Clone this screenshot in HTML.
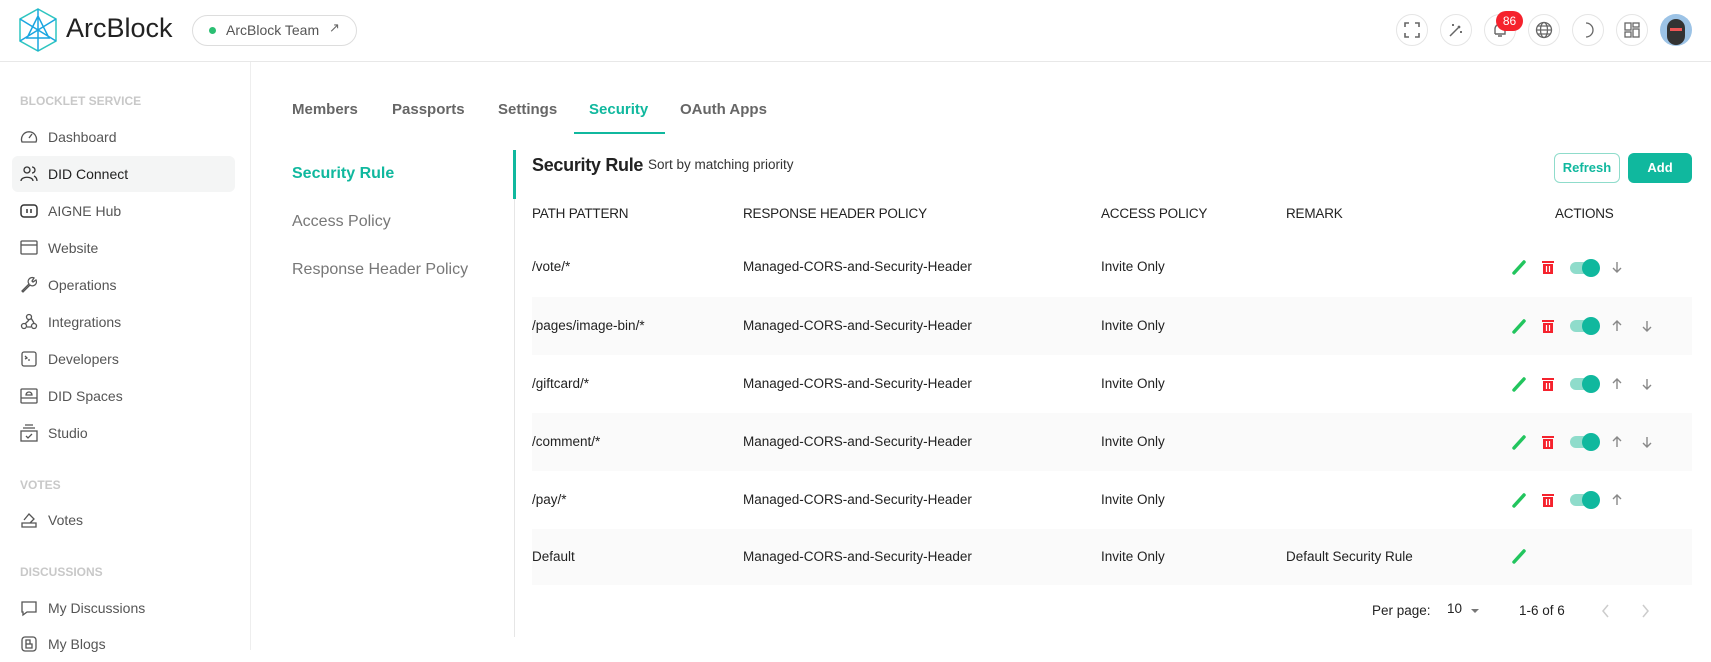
<!DOCTYPE html>
<html><head><meta charset="utf-8"><style>
*{box-sizing:border-box;margin:0;padding:0}
body{width:1711px;height:650px;overflow:hidden;background:#fff;font-family:"Liberation Sans",sans-serif;color:#222;position:relative}
.a{position:absolute;white-space:nowrap}
.hdr{position:absolute;left:0;top:0;width:1711px;height:62px;border-bottom:1px solid #e8e8e8}
.ic{position:absolute;top:14px;width:32px;height:32px;border:1px solid #e5e5e5;border-radius:50%;display:flex;align-items:center;justify-content:center}
.side{position:absolute;left:0;top:62px;width:251px;height:588px;border-right:1px solid #eee}
.sec{position:absolute;left:20px;font-size:12px;font-weight:bold;color:#c8c8c8}
.it{position:absolute;left:12px;width:223px;height:36px;display:flex;align-items:center;padding-left:8px;font-size:14px;color:#555;border-radius:6px}
.it svg{margin-right:10px}
.tab{position:absolute;top:101px;font-size:15px;font-weight:bold;color:#666}
.th{position:absolute;top:206px;font-size:13.5px;color:#222;letter-spacing:-0.2px}
.td{position:absolute;font-size:13.5px;color:#222}
.stripe{position:absolute;left:532px;width:1160px;height:58px;background:#fafafa}
.tog{position:absolute;width:28px;height:12px;border-radius:6px;background:#8fdccb}
.tog:after{content:"";position:absolute;right:-2px;top:-3px;width:18px;height:18px;border-radius:50%;background:#10b89e}
</style></head><body>
<div class="hdr"></div>
<svg class="a" style="left:19px;top:8px" width="38" height="44" viewBox="0 0 38 44" fill="none" stroke="#2ec5c0" stroke-width="1.5"><path d="M19 1L37 11V33L19 43L1 33V11Z"/><path d="M19 1V22M1 11L19 22L37 11M19 22V43M1 33L19 22L37 33M19 8L8 30H30Z" stroke="#1aa6e0"/></svg>
<div class="a" style="left:66px;top:13px;font-size:27px;color:#222">ArcBlock</div>
<div class="a" style="left:192px;top:15px;width:165px;height:31px;border:1px solid #ddd;border-radius:16px"></div>
<div class="a" style="left:209px;top:27px;width:7px;height:7px;border-radius:50%;background:#2bbf73"></div>
<div class="a" style="left:226px;top:22px;font-size:14px;color:#555">ArcBlock Team</div>
<div class="a" style="left:329px;top:20px;font-size:13px;color:#666">↗</div>
<div class="ic" style="left:1396px"><svg width="16" height="16" viewBox="0 0 16 16" fill="none" stroke="#666" stroke-width="1.6"><path d="M1 5V1H5M11 1H15V5M15 11V15H11M5 15H1V11"/></svg></div>
<div class="ic" style="left:1440px"><svg width="16" height="16" viewBox="0 0 16 16" fill="none" stroke="#666" stroke-width="1.5"><path d="M2 14L12 4M10 4L12 6M5 2V4M4 3H6M13 9V11M12 10H14"/></svg></div>
<div class="ic" style="left:1484px"><svg width="16" height="16" viewBox="0 0 16 16" fill="none" stroke="#666" stroke-width="1.4"><path d="M3 12V7A5 5 0 0 1 13 7V12H3M6 14H10"/></svg></div>
<div class="a" style="left:1496px;top:11px;width:27px;height:20px;border-radius:10px;background:#f5222d;color:#fff;font-size:12px;text-align:center;line-height:20px">86</div>
<div class="ic" style="left:1528px"><svg width="18" height="18" viewBox="0 0 18 18" fill="none" stroke="#666" stroke-width="1.3"><circle cx="9" cy="9" r="7.5"/><ellipse cx="9" cy="9" rx="3.5" ry="7.5"/><path d="M1.5 9H16.5M3 5H15M3 13H15"/></svg></div>
<div class="ic" style="left:1572px"><svg width="16" height="16" viewBox="0 0 16 16" fill="none" stroke="#666" stroke-width="1.3"><path d="M6 1A7 7 0 0 1 6 15A7 7 0 0 0 6 1Z"/></svg></div>
<div class="ic" style="left:1616px"><svg width="16" height="16" viewBox="0 0 16 16" fill="none" stroke="#666" stroke-width="1.3"><rect x="1" y="1" width="6" height="7"/><rect x="9" y="1" width="6" height="4"/><rect x="1" y="10" width="6" height="5"/><rect x="9" y="7" width="6" height="8"/></svg></div>
<div class="a" style="left:1660px;top:14px;width:32px;height:32px;border-radius:50%;background:#9cc3e6;overflow:hidden"><div style="position:absolute;left:7px;top:5px;width:18px;height:26px;border-radius:9px;background:#333"></div><div style="position:absolute;left:10px;top:14px;width:12px;height:3px;background:#e55"></div></div>

<div class="side">
<div class="sec" style="top:32px">BLOCKLET SERVICE</div>
<div class="sec" style="top:416px">VOTES</div>
<div class="sec" style="top:503px">DISCUSSIONS</div>
</div>
<div class="it" style="top:119px"><svg width="18" height="18" viewBox="0 0 18 18" fill="none" stroke="#555" stroke-width="1.3"><path d="M2 14A7.5 7.5 0 1 1 16 14Z"/><path d="M9 10L12 6"/></svg>Dashboard</div>
<div class="it" style="top:156px;background:#f4f5f5;color:#222"><svg width="18" height="18" viewBox="0 0 18 18" fill="none" stroke="#333" stroke-width="1.3"><circle cx="7" cy="5" r="3"/><path d="M1 16C1 11 13 11 13 16M12 2A3 3 0 0 1 12 8M14 11C16 12 17 14 17 16"/></svg>DID Connect</div>
<div class="it" style="top:193px"><svg width="18" height="18" viewBox="0 0 18 18" fill="none" stroke="#333" stroke-width="1.5"><rect x="1" y="3" width="16" height="12" rx="3"/><path d="M7 7V11M11 7V11"/></svg>AIGNE Hub</div>
<div class="it" style="top:230px"><svg width="18" height="18" viewBox="0 0 18 18" fill="none" stroke="#555" stroke-width="1.3"><rect x="1" y="2" width="16" height="13" rx="1"/><path d="M1 6H17"/></svg>Website</div>
<div class="it" style="top:267px"><svg width="18" height="18" viewBox="0 0 18 18" fill="none" stroke="#555" stroke-width="1.3"><path d="M2 15L9 8A4 4 0 0 1 14 2L12 5L13 6L16 4A4 4 0 0 1 10 9L3 16Z"/></svg>Operations</div>
<div class="it" style="top:304px"><svg width="18" height="18" viewBox="0 0 18 18" fill="none" stroke="#555" stroke-width="1.3"><circle cx="9" cy="4" r="2.5"/><circle cx="4" cy="13" r="2.5"/><circle cx="14" cy="13" r="2.5"/><path d="M9 7L5 11M11 5L14 10M7 14H11"/></svg>Integrations</div>
<div class="it" style="top:341px"><svg width="18" height="18" viewBox="0 0 18 18" fill="none" stroke="#555" stroke-width="1.3"><rect x="2" y="2" width="14" height="14" rx="2"/><path d="M5 6L7 8L5 9M8 10H10"/></svg>Developers</div>
<div class="it" style="top:378px"><svg width="18" height="18" viewBox="0 0 18 18" fill="none" stroke="#555" stroke-width="1.3"><rect x="1" y="2" width="16" height="14" rx="1"/><path d="M1 11H17M6 8A3 3 0 0 1 12 8Z"/></svg>DID Spaces</div>
<div class="it" style="top:415px"><svg width="18" height="18" viewBox="0 0 18 18" fill="none" stroke="#555" stroke-width="1.3"><path d="M5 1H13M3 4H15"/><rect x="1" y="7" width="16" height="10"/><path d="M6 12L8 14L12 10"/></svg>Studio</div>
<div class="it" style="top:502px"><svg width="18" height="18" viewBox="0 0 18 18" fill="none" stroke="#555" stroke-width="1.3"><path d="M4 9L9 3L14 8L10 12M2 12H16V16H2Z"/></svg>Votes</div>
<div class="it" style="top:590px"><svg width="18" height="18" viewBox="0 0 18 18" fill="none" stroke="#555" stroke-width="1.3"><path d="M2 3H16V13H7L3 16V13H2Z"/></svg>My Discussions</div>
<div class="it" style="top:626px"><svg width="18" height="18" viewBox="0 0 18 18" fill="none" stroke="#555" stroke-width="1.3"><rect x="2" y="2" width="14" height="14" rx="3"/><path d="M6 5H10V9H6ZM6 9H12V13H6Z"/></svg>My Blogs</div>

<div class="tab" style="left:292px">Members</div>
<div class="tab" style="left:392px">Passports</div>
<div class="tab" style="left:498px">Settings</div>
<div class="tab" style="left:589px;color:#10b89e">Security</div>
<div class="tab" style="left:680px">OAuth Apps</div>
<div class="a" style="left:574px;top:132px;width:91px;height:2px;background:#10b89e"></div>

<div class="a" style="left:292px;top:165px;font-size:16px;font-weight:bold;color:#10b89e">Security Rule</div>
<div class="a" style="left:292px;top:213px;font-size:16px;color:#777">Access Policy</div>
<div class="a" style="left:292px;top:261px;font-size:16px;color:#777">Response Header Policy</div>
<div class="a" style="left:514px;top:150px;width:1px;height:487px;background:#e6e6e6"></div>
<div class="a" style="left:513px;top:150px;width:3px;height:49px;background:#10b89e"></div>

<div class="a" style="left:532px;top:155px;font-size:18px;font-weight:bold;letter-spacing:-0.3px">Security Rule</div>
<div class="a" style="left:648px;top:157px;font-size:13.5px;color:#333">Sort by matching priority</div>
<div class="a" style="left:1554px;top:153px;width:66px;height:30px;border:1px solid #8fdccb;border-radius:6px;color:#10b89e;font-size:13px;font-weight:bold;text-align:center;line-height:28px">Refresh</div>
<div class="a" style="left:1628px;top:153px;width:64px;height:30px;border-radius:6px;background:#10b89e;color:#fff;font-size:13px;font-weight:bold;text-align:center;line-height:30px">Add</div>

<div class="th" style="left:532px">PATH PATTERN</div>
<div class="th" style="left:743px">RESPONSE HEADER POLICY</div>
<div class="th" style="left:1101px">ACCESS POLICY</div>
<div class="th" style="left:1286px">REMARK</div>
<div class="th" style="left:1555px">ACTIONS</div>

<div class="stripe" style="top:297px"></div>
<div class="stripe" style="top:413px"></div>
<div class="stripe" style="top:529px;height:56px"></div>

<div class="td" style="left:532px;top:259px">/vote/*</div>
<div class="td" style="left:532px;top:318px">/pages/image-bin/*</div>
<div class="td" style="left:532px;top:376px">/giftcard/*</div>
<div class="td" style="left:532px;top:434px">/comment/*</div>
<div class="td" style="left:532px;top:492px">/pay/*</div>
<div class="td" style="left:532px;top:549px">Default</div>
<div class="td" style="left:743px;top:259px">Managed-CORS-and-Security-Header</div>
<div class="td" style="left:743px;top:318px">Managed-CORS-and-Security-Header</div>
<div class="td" style="left:743px;top:376px">Managed-CORS-and-Security-Header</div>
<div class="td" style="left:743px;top:434px">Managed-CORS-and-Security-Header</div>
<div class="td" style="left:743px;top:492px">Managed-CORS-and-Security-Header</div>
<div class="td" style="left:743px;top:549px">Managed-CORS-and-Security-Header</div>
<div class="td" style="left:1101px;top:259px">Invite Only</div>
<div class="td" style="left:1101px;top:318px">Invite Only</div>
<div class="td" style="left:1101px;top:376px">Invite Only</div>
<div class="td" style="left:1101px;top:434px">Invite Only</div>
<div class="td" style="left:1101px;top:492px">Invite Only</div>
<div class="td" style="left:1101px;top:549px">Invite Only</div>
<div class="td" style="left:1286px;top:549px">Default Security Rule</div>

<svg class="a" style="left:0;top:0" width="1711" height="650">
<defs>
<g id="pen"><path d="M-5 6L5 -5" stroke="#22c55e" stroke-width="3.5" stroke-linecap="round"/></g>
<g id="bin"><rect x="-5" y="-4" width="10" height="10" fill="#f5222d"/><rect x="-6" y="-7" width="12" height="2" fill="#f5222d"/><path d="M-1.5 -2V4M1.5 -2V4" stroke="#fff" stroke-width="1.2"/></g>
<g id="dn"><path d="M0 -5V5M-4 1L0 5L4 1" stroke="#888" stroke-width="1.4" fill="none"/></g>
<g id="up"><path d="M0 5V-5M-4 -1L0 -5L4 -1" stroke="#888" stroke-width="1.4" fill="none"/></g>
</defs>
<use href="#pen" x="1519" y="267"/><use href="#bin" x="1548" y="268"/><use href="#dn" x="1617" y="267"/>
<use href="#pen" x="1519" y="326"/><use href="#bin" x="1548" y="327"/><use href="#up" x="1617" y="326"/><use href="#dn" x="1647" y="326"/>
<use href="#pen" x="1519" y="384"/><use href="#bin" x="1548" y="385"/><use href="#up" x="1617" y="384"/><use href="#dn" x="1647" y="384"/>
<use href="#pen" x="1519" y="442"/><use href="#bin" x="1548" y="443"/><use href="#up" x="1617" y="442"/><use href="#dn" x="1647" y="442"/>
<use href="#pen" x="1519" y="500"/><use href="#bin" x="1548" y="501"/><use href="#up" x="1617" y="500"/>
<use href="#pen" x="1519" y="556"/>
<path d="M1471 609L1475 613L1479 609Z" fill="#777"/>
<path d="M1608 605L1603 611L1608 617M1643 605L1648 611L1643 617" stroke="#ccc" stroke-width="1.5" fill="none"/>
</svg>
<div class="tog" style="left:1570px;top:262px"></div>
<div class="tog" style="left:1570px;top:320px"></div>
<div class="tog" style="left:1570px;top:378px"></div>
<div class="tog" style="left:1570px;top:436px"></div>
<div class="tog" style="left:1570px;top:494px"></div>

<div class="td" style="left:1372px;top:603px">Per page:</div>
<div class="td" style="left:1447px;top:601px">10</div>
<div class="td" style="left:1519px;top:603px">1-6 of 6</div>
</body></html>
